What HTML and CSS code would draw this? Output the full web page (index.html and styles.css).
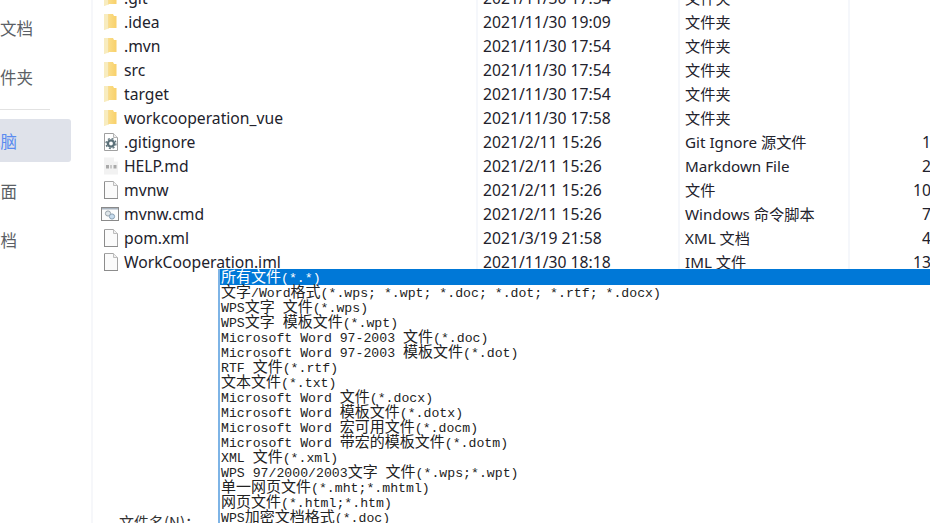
FILE: index.html
```html
<!DOCTYPE html>
<html lang="zh-CN">
<head>
<meta charset="utf-8">
<title>打开文件</title>
<link rel="stylesheet" href="styles.css">
</head>
<body>
<svg class="defs" width="0" height="0" aria-hidden="true">
  <defs>
    <linearGradient id="fold" x1="0" y1="0" x2="1" y2="0">
      <stop offset="0" stop-color="#fbe08f"/>
      <stop offset="1" stop-color="#f8d06a"/>
    </linearGradient>
    <symbol id="i-folder" viewBox="0 0 16 18">
      <path d="M4 1h6l1 2h2.500v12H4z" fill="url(#fold)"/>
      <path d="M1 1h4.500v14.500L1.500 17H1z" fill="#f8ecbf"/>
      <path d="M5.500 1v14.500" stroke="#f5d687" stroke-width="0.600"/>
    </symbol>
    <symbol id="i-file" viewBox="0 0 16 18">
      <path d="M1.500.5h9l4 4v13h-13z" fill="#fbfbfb" stroke="#a6a6a6"/>
      <path d="M10.500.5v4h4" fill="#f0f0f0" stroke="#bdbdbd"/>
      <path d="M1 17.500h14M1.500 1v17" stroke="#8c8c8c"/>
    </symbol>
    <symbol id="i-git" viewBox="0 0 16 18">
      <path d="M1.500.5h9l4 4v13h-13z" fill="#fff" stroke="#a0a0a0"/>
      <path d="M10.500.5v4h4" fill="#eee" stroke="#b5b5b5"/>
      <circle cx="8" cy="10.500" r="3.100" fill="none" stroke="#5b7078" stroke-width="2.400"/>
      <circle cx="8" cy="10.500" r="5" fill="none" stroke="#5b7078" stroke-width="1.300" stroke-dasharray="2 1.930"/>
    </symbol>
    <symbol id="i-md" viewBox="0 0 16 18">
      <path d="M1 .5h10l4 4v13H1z" fill="#f2f2f2"/>
      <path d="M11 .5v4h4" fill="#fff"/>
      <rect x="3" y="8" width="3" height="3.500" fill="#a9a9a9"/>
      <rect x="7" y="8" width="2" height="3.500" fill="#c9c9c9"/>
      <rect x="10.500" y="8" width="3" height="3.500" fill="#a9a9a9"/>
    </symbol>
    <symbol id="i-cmd" viewBox="0 0 18 16">
      <rect x="0.500" y="1.500" width="17" height="13" fill="#fdfdfd" stroke="#8a8a8a"/>
      <rect x="1" y="2" width="16" height="1.500" fill="#a9b4bf"/>
      <circle cx="7" cy="7.500" r="2.600" fill="#dfe6ea" stroke="#9aa4ab"/>
      <circle cx="11" cy="10.500" r="2.600" fill="#c7dcee" stroke="#8aa0b3"/>
    </symbol>
  </defs>
</svg>
<div class="window">
  <aside class="sidebar">
    <div class="nav nav-deep">文档</div>
    <div class="nav nav-deep">文件夹</div>
    <div class="nav-rule"></div>
    <div class="nav nav-on">此电脑</div>
    <div class="nav">桌面</div>
    <div class="nav">文档</div>
  </aside>
  <main class="main">
    <div class="list">
      <div class="row"><div class="name"><svg class="ico"><use href="#i-folder"/></svg>.git</div><div class="cell">2021/11/30 17:54</div><div class="cell type">文件夹</div><div class="cell size"></div></div>
      <div class="row"><div class="name"><svg class="ico"><use href="#i-folder"/></svg>.idea</div><div class="cell">2021/11/30 19:09</div><div class="cell type">文件夹</div><div class="cell size"></div></div>
      <div class="row"><div class="name"><svg class="ico"><use href="#i-folder"/></svg>.mvn</div><div class="cell">2021/11/30 17:54</div><div class="cell type">文件夹</div><div class="cell size"></div></div>
      <div class="row"><div class="name"><svg class="ico"><use href="#i-folder"/></svg>src</div><div class="cell">2021/11/30 17:54</div><div class="cell type">文件夹</div><div class="cell size"></div></div>
      <div class="row"><div class="name"><svg class="ico"><use href="#i-folder"/></svg>target</div><div class="cell">2021/11/30 17:54</div><div class="cell type">文件夹</div><div class="cell size"></div></div>
      <div class="row"><div class="name"><svg class="ico"><use href="#i-folder"/></svg>workcooperation_vue</div><div class="cell">2021/11/30 17:58</div><div class="cell type">文件夹</div><div class="cell size"></div></div>
      <div class="row"><div class="name"><svg class="ico"><use href="#i-git"/></svg>.gitignore</div><div class="cell">2021/2/11 15:26</div><div class="cell type">Git Ignore 源文件</div><div class="cell size">1 KB</div></div>
      <div class="row"><div class="name"><svg class="ico"><use href="#i-md"/></svg>HELP.md</div><div class="cell">2021/2/11 15:26</div><div class="cell type">Markdown File</div><div class="cell size">2 KB</div></div>
      <div class="row"><div class="name"><svg class="ico"><use href="#i-file"/></svg>mvnw</div><div class="cell">2021/2/11 15:26</div><div class="cell type">文件</div><div class="cell size">10 KB</div></div>
      <div class="row"><div class="name"><svg class="ico ico-wide"><use href="#i-cmd"/></svg>mvnw.cmd</div><div class="cell">2021/2/11 15:26</div><div class="cell type">Windows 命令脚本</div><div class="cell size">7 KB</div></div>
      <div class="row"><div class="name"><svg class="ico"><use href="#i-file"/></svg>pom.xml</div><div class="cell">2021/3/19 21:58</div><div class="cell type">XML 文档</div><div class="cell size">4 KB</div></div>
      <div class="row"><div class="name"><svg class="ico"><use href="#i-file"/></svg>WorkCooperation.iml</div><div class="cell">2021/11/30 18:18</div><div class="cell type">IML 文件</div><div class="cell size">13 KB</div></div>
    </div>
    <div class="filename">文件名(N)：</div>
  </main>
</div>
<div class="dropdown">
  <div class="opt opt-on"><span class="c">所有文件</span>(*.*)</div>
  <div class="opt"><span class="c">文字</span>/Word<span class="c">格式</span>(*.wps; *.wpt; *.doc; *.dot; *.rtf; *.docx)</div>
  <div class="opt">WPS<span class="c">文字</span> <span class="c">文件</span>(*.wps)</div>
  <div class="opt">WPS<span class="c">文字</span> <span class="c">模板文件</span>(*.wpt)</div>
  <div class="opt">Microsoft Word 97-2003 <span class="c">文件</span>(*.doc)</div>
  <div class="opt">Microsoft Word 97-2003 <span class="c">模板文件</span>(*.dot)</div>
  <div class="opt">RTF <span class="c">文件</span>(*.rtf)</div>
  <div class="opt"><span class="c">文本文件</span>(*.txt)</div>
  <div class="opt">Microsoft Word <span class="c">文件</span>(*.docx)</div>
  <div class="opt">Microsoft Word <span class="c">模板文件</span>(*.dotx)</div>
  <div class="opt">Microsoft Word <span class="c">宏可用文件</span>(*.docm)</div>
  <div class="opt">Microsoft Word <span class="c">带宏的模板文件</span>(*.dotm)</div>
  <div class="opt">XML <span class="c">文件</span>(*.xml)</div>
  <div class="opt">WPS 97/2000/2003<span class="c">文字</span> <span class="c">文件</span>(*.wps;*.wpt)</div>
  <div class="opt"><span class="c">单一网页文件</span>(*.mht;*.mhtml)</div>
  <div class="opt"><span class="c">网页文件</span>(*.html;*.htm)</div>
  <div class="opt">WPS<span class="c">加密文档格式</span>(*.doc)</div>
</div>
</body>
</html>
```
FILE: styles.css
```css
* { box-sizing: border-box; }
html, body { margin: 0; height: 100%; overflow: hidden; background: #fff; }
body { position: relative; width: 930px; height: 523px; font-family: "Noto Sans", "Noto Sans CJK SC", sans-serif; color: #22222c; }
.defs { position: absolute; }
.window { display: flex; height: 523px; }

.sidebar { flex: 0 0 93px; border-right: 2px solid #f6f7fa; padding-top: 6px; color: #5b5f66; font-size: 16.500px; font-family: "Noto Sans CJK SC", sans-serif; }
.nav { display: flex; justify-content: flex-end; align-items: center; width: 71px; height: 43px; padding-right: 54px; margin-bottom: 6px; white-space: nowrap; }
.nav-deep { padding-right: 38px; }
.nav-rule { width: 50px; height: 1px; margin: 11px 0 9px; background: #e2e2e2; }
.nav-on { background: #dfe2ea; border-radius: 0 3px 3px 0; color: #5a8bf0; margin-bottom: 7px; }

.main { flex: 1; min-width: 0; display: flex; flex-direction: column; margin-top: -14px; }
.row { display: grid; grid-template-columns: 383px 202px 170px 107px; height: 24px; font-size: 15.700px; line-height: 24px; white-space: nowrap; }
.name { display: flex; align-items: center; padding-left: 10px; }
.ico { flex: 0 0 16px; width: 16px; height: 18px; margin-right: 5px; }
.ico-wide { flex-basis: 18px; width: 18px; height: 16px; margin-left: -2px; }
.cell { border-left: 2px solid #f5f7fb; padding-left: 5px; }
.cell.type { font-size: 15.200px; }
.cell.size { text-align: right; }
.filename { margin: 239px 0 0 26px; font-size: 15px; line-height: 18px; color: #333; font-family: "Noto Sans CJK SC", sans-serif; white-space: nowrap; }

.dropdown { position: absolute; left: 218px; top: 269px; right: 0; bottom: 0; overflow: hidden; background: #fff; border-left: 2px solid #7eb4e6; font-family: "Liberation Mono", "Noto Sans CJK SC", monospace; font-size: 13.200px; color: #222; }
.opt { height: 15px; line-height: 18px; padding-left: 1px; white-space: pre; }
.opt-on { height: 16px; line-height: 19px; background: #0078d7; color: #fff; }
.c { font-family: "Noto Sans CJK SC", sans-serif; font-size: 15px; line-height: 0; }
```
